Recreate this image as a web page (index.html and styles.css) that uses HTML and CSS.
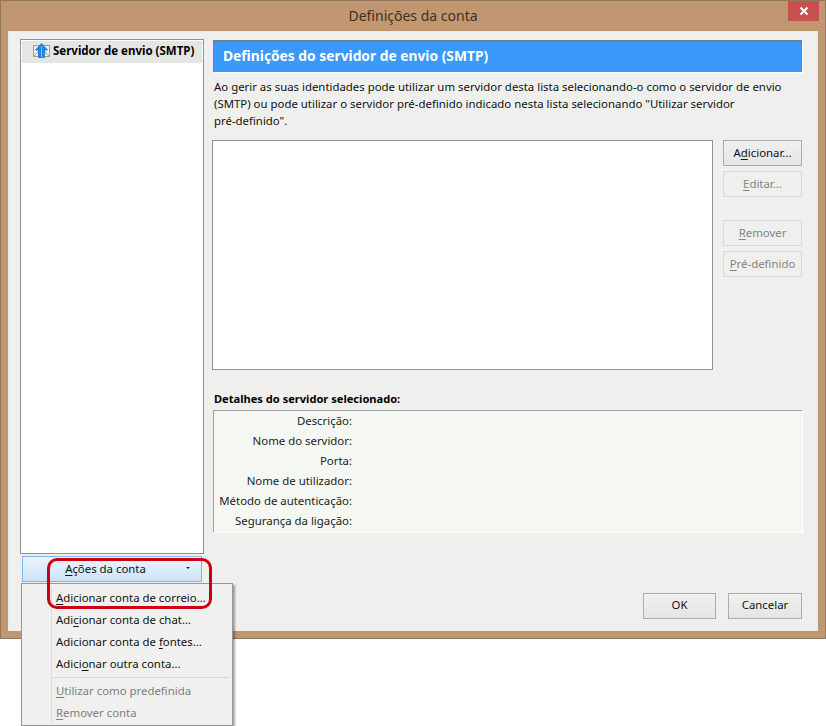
FILE: index.html
```html
<!DOCTYPE html>
<html lang="pt">
<head>
<meta charset="utf-8">
<title>Definições da conta</title>
<link rel="stylesheet" href="styles.css">
</head>
<body>
<div class="window">
  <div class="titlebar">
    <span class="title">Definições da conta</span>
    <div class="close"><svg width="10" height="10" viewBox="0 0 10 10"><path d="M1.5 1.5l7 7M8.5 1.5l-7 7" stroke="#fff" stroke-width="2" fill="none"/></svg></div>
  </div>
  <div class="content">
    <div class="sidebar">
      <div class="tree">
        <div class="tree-row">
          <svg class="smtp-icon" width="17" height="15" viewBox="0 0 17 15">
            <rect x="0.5" y="2.500" width="16" height="11" fill="#eceeef" stroke="#9a9ea2"/>
            <path d="M1 13l5-5M16 13l-5-5" stroke="#9a9ea2" fill="none"/>
            <path d="M8.500 0.500L14.500 7H11.500V14.500H5.500V7H2.500z" fill="#1f86ec" stroke="#1566c4" stroke-width="0.700"/>
            <path d="M8 3h1v11H8z" fill="#7cc0f8"/>
          </svg>
          <span>Servidor de envio (SMTP)</span>
        </div>
      </div>
      <div class="actions"><span class="actions-label"><u>A</u>ções da conta</span><span class="arrow"></span></div>
    </div>
    <div class="main">
      <div class="header">Definições do servidor de envio (SMTP)</div>
      <p class="desc">Ao gerir as suas identidades pode utilizar um servidor desta lista selecionando-o como o servidor de envio (SMTP) ou pode utilizar o servidor pré-definido indicado nesta lista selecionando "Utilizar servidor <span class="nowrap">pré-definido".</span></p>
      <div class="server-area">
        <div class="listbox"></div>
        <div class="side-buttons">
          <div class="btn">A<u>d</u>icionar...</div>
          <div class="btn off"><u>E</u>ditar...</div>
          <div class="btn off gap"><u>R</u>emover</div>
          <div class="btn off"><u>P</u>ré-definido</div>
        </div>
      </div>
      <div class="details-title">Detalhes do servidor selecionado:</div>
      <div class="details">
        <div class="row">Descrição:</div>
        <div class="row">Nome do servidor:</div>
        <div class="row">Porta:</div>
        <div class="row">Nome de utilizador:</div>
        <div class="row">Método de autenticação:</div>
        <div class="row">Segurança da ligação:</div>
      </div>
      <div class="footer">
        <div class="btn ok">OK</div>
        <div class="btn cancel">Cancelar</div>
      </div>
    </div>
  </div>
</div>
<div class="menu">
  <div class="menu-gutter"></div>
  <div class="item"><u>A</u>dicionar conta de correio...</div>
  <div class="item">Adi<u>c</u>ionar conta de chat...</div>
  <div class="item">Adicionar conta de <u>f</u>ontes...</div>
  <div class="item">Adici<u>o</u>nar outra conta...</div>
  <div class="sep"></div>
  <div class="item off"><u>U</u>tilizar como predefinida</div>
  <div class="item off"><u>R</u>emover conta</div>
</div>
<div class="annotation"></div>
</body>
</html>
```
FILE: styles.css
```css
* { box-sizing: border-box; }
html, body { margin: 0; padding: 0; background: #fff; }
body {
  width: 826px;
  height: 726px;
  overflow: hidden;
  position: relative;
  font: 11.400px/17px "Noto Sans", "Open Sans", sans-serif;
  color: #111;
}
u { text-decoration: underline; text-underline-offset: 2px; text-decoration-thickness: 1px; }
.nowrap { white-space: nowrap; }
.window {
  width: 826px;
  height: 639px;
  background: #c09770;
  border: 1px solid #8f7860;
  display: flex;
  flex-direction: column;
}
.titlebar {
  height: 30px;
  flex: none;
  display: flex;
  justify-content: center;
  position: relative;
}
.title { font-size: 14px; line-height: 29px; color: #3c3226; }
.close {
  position: absolute;
  right: 6px;
  top: 0;
  width: 31px;
  height: 20px;
  background: #c75050;
  display: flex;
  align-items: center;
  justify-content: center;
}
.content {
  flex: 1;
  margin: 0 7px 7px;
  background: #eff0ee;
  border: 1px solid #e9ebe8;
  padding: 7px 15px 11px 11px;
  display: flex;
  gap: 8px;
}
.sidebar { width: 184px; flex: none; display: flex; flex-direction: column; }
.tree {
  height: 515px;
  background: #fff;
  border: 1px solid #8e9297;
  padding: 1px;
}
.tree-row {
  height: 22px;
  background: #e4e6e4;
  display: flex;
  align-items: center;
  gap: 3px;
  padding-left: 11px;
  padding-bottom: 3px;
  font-weight: 700;
  font-size: 11.500px;
  color: #000;
  white-space: nowrap;
}
.smtp-icon { flex: none; }
.actions {
  width: 180px;
  height: 26px;
  margin: 2px 0 0 2px;
  border: 1px solid #7eb4ea;
  background: linear-gradient(#ecf4fc, #cde3fa);
  display: flex;
  align-items: center;
  justify-content: center;
  padding-bottom: 2px;
  position: relative;
}
.actions-label { margin-right: 13px; }
.arrow {
  position: absolute;
  right: 11px;
  top: 10px;
  border: 2.500px solid transparent;
  border-top-color: #222;
  border-bottom: 0;
}
.main { flex: 1; display: flex; flex-direction: column; min-width: 0; }
.header {
  height: 32px;
  margin: 1px 0 0 1px;
  background: #3b99fc;
  border-top: 2px solid #6f7f8e;
  border-left: 1px solid #6f7f8e;
  border-right: 1px solid #6f7f8e;
  box-shadow: 1px 1px 0 #fff;
  color: #fff;
  font-weight: 700;
  font-size: 13.800px;
  line-height: 28px;
  padding-left: 9px;
}
.desc {
  margin: 6px 0 0 2px;
  height: 51px;
  width: 585px;
}
.server-area { display: flex; gap: 10px; margin-top: 11px; }
.listbox {
  width: 501px;
  height: 230px;
  background: #fff;
  border: 1px solid #8e9297;
}
.side-buttons { width: 79px; display: flex; flex-direction: column; gap: 5px; }
.btn {
  height: 26px;
  border: 1px solid #acacac;
  background: linear-gradient(#f0f0f0, #e5e5e5);
  text-align: center;
  line-height: 24px;
  color: #111;
}
.btn.off {
  background: #eff0ee;
  border-color: #d9d9d9;
  color: #838383;
}
.btn.gap { margin-top: 18px; }
.details-title {
  margin: 20px 0 0 2px;
  font-weight: 700;
  font-size: 11.100px;
  color: #000;
}
.details {
  margin: 3px 0 0 1px;
  height: 122px;
  background: #f5f7f3;
  border-top: 1px solid #a0a0a0;
  border-left: 1px solid #a0a0a0;
  box-shadow: 1px 1px 0 #fff;
}
.row {
  width: 138px;
  height: 20px;
  line-height: 20px;
  text-align: right;
  white-space: nowrap;
  color: #222;
}
.footer {
  margin-top: auto;
  display: flex;
  justify-content: flex-end;
  gap: 12px;
}
.footer .btn { line-height: 22px; }
.ok { width: 73px; }
.cancel { width: 74px; }
.menu {
  position: absolute;
  left: 21px;
  top: 583px;
  width: 212px;
  height: 143px;
  background: #f0f1ef;
  border: 1px solid #979797;
  box-shadow: 2px 2px 2px rgba(0, 0, 0, 0.35);
  padding-top: 3px;
}
.menu-gutter {
  position: absolute;
  left: 29px;
  top: 2px;
  bottom: 2px;
  width: 1px;
  background: #dcdcdc;
}
.item {
  height: 22px;
  line-height: 22px;
  padding-left: 34px;
  white-space: nowrap;
  position: relative;
}
.item.off { color: #7d7d7d; }
.sep {
  height: 1px;
  margin: 2px 2px 2px 30px;
  background: #d7d7d7;
}
.annotation {
  position: absolute;
  left: 47px;
  top: 558px;
  width: 165px;
  height: 51px;
  border: 3px solid #cc0012;
  border-radius: 10px;
}
```
